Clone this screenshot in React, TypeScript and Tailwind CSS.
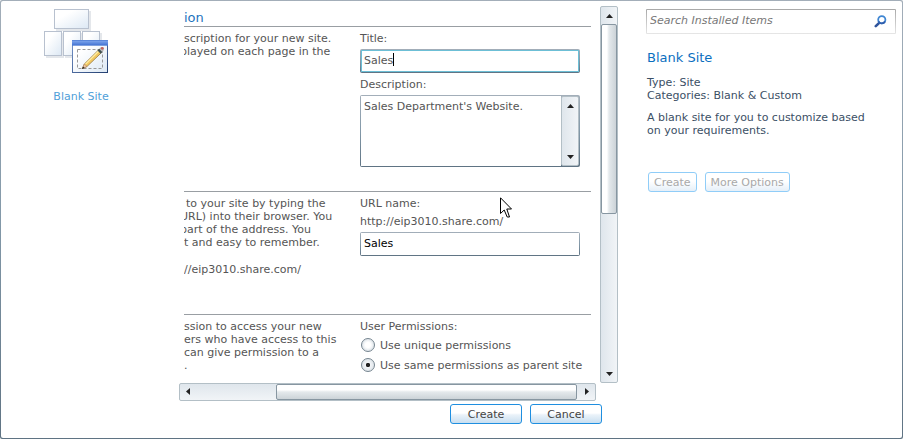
import { useState } from "react";
import type { ReactNode } from "react";

const frame = "rounded-[2px] bg-linear-to-b from-[#a3aeb9] via-[#8399a9] to-[#5f7383] p-px";

function Arrow({ dir }: { dir: "up" | "down" | "left" | "right" }) {
  const points = {
    up: "0,6 3.5,2 7,6",
    down: "0,2 7,2 3.5,6",
    left: "5,0 5,7 1,3.5",
    right: "2,0 2,7 6,3.5",
  }[dir];
  return (
    <svg width="7" height="8" viewBox="0 0 7 8" fill="#222" aria-hidden="true">
      <polygon points={points} />
    </svg>
  );
}

function VerticalBar({ children, size }: { children?: ReactNode; size: string }) {
  return (
    <div className={`flex flex-col rounded-[2px] border border-[#b3bfc6] bg-linear-to-r from-[#dfe6ec] to-[#f1f4f7] ${size}`}>
      <button type="button" aria-label="Scroll up" className="flex h-[17px] w-full shrink-0 items-center justify-center">
        <Arrow dir="up" />
      </button>
      <div className="flex-1">{children}</div>
      <button type="button" aria-label="Scroll down" className="flex h-[17px] w-full shrink-0 items-center justify-center">
        <Arrow dir="down" />
      </button>
    </div>
  );
}

function HorizontalBar() {
  return (
    <div className="mr-[22px] flex h-[18px] rounded-[2px] border border-[#b3bfc6] bg-linear-to-b from-[#dfe6ec] to-[#f1f4f7]">
      <button type="button" aria-label="Scroll left" className="flex w-4 shrink-0 items-center justify-center">
        <Arrow dir="left" />
      </button>
      <div className="flex flex-1 justify-end">
        <div className="w-[301px] rounded-[2px] border border-[#8796a1] bg-linear-to-b from-white from-35% via-[#e4e9ec] via-50% to-[#ccd3d8]" />
      </div>
      <button type="button" aria-label="Scroll right" className="flex w-[18px] shrink-0 items-center justify-center">
        <Arrow dir="right" />
      </button>
    </div>
  );
}

function Section({ help, children, pad }: { help: ReactNode; children: ReactNode; pad: string }) {
  return (
    <section className={`flex border-t border-[#999ea3] pt-[5px] ${pad}`}>
      <div className="w-[176px] shrink-0 overflow-hidden whitespace-nowrap">{help}</div>
      <div className="w-[220px] whitespace-nowrap">{children}</div>
    </section>
  );
}

function SiteIcon() {
  return (
    <svg width="74" height="66" viewBox="0 0 74 66" aria-hidden="true">
      <defs>
        <linearGradient id="tile" x1="0" y1="0" x2="1" y2="1">
          <stop offset="0.3" stopColor="#fff" />
          <stop offset="1" stopColor="#dce8f4" />
        </linearGradient>
        <linearGradient id="bar" x1="0" y1="0" x2="0" y2="1">
          <stop offset="0" stopColor="#88aef0" />
          <stop offset="1" stopColor="#4676d4" />
        </linearGradient>
        <linearGradient id="edge" x1="0" y1="0" x2="1" y2="1">
          <stop offset="0" stopColor="#7796cc" />
          <stop offset="1" stopColor="#233f70" />
        </linearGradient>
      </defs>
      <g fill="#e4e7eb">
        <rect x="12" y="2" width="35" height="20" />
        <rect x="2" y="24" width="18" height="25" />
        <rect x="21" y="24" width="18" height="25" />
        <rect x="40" y="24" width="18" height="25" />
      </g>
      <g fill="url(#tile)" stroke="#b8c1cf">
        <rect x="10.5" y="0.5" width="34" height="19" />
        <rect x="0.5" y="22.5" width="17" height="24" />
        <rect x="19.5" y="22.5" width="17" height="24" />
        <rect x="38.5" y="22.5" width="17" height="24" />
      </g>
      <rect x="28.5" y="31.5" width="35" height="32" fill="url(#tile)" stroke="url(#edge)" />
      <rect x="28" y="31" width="36" height="5" fill="url(#bar)" />
      <path d="M28 31.5h36M28 36.5h36" stroke="#4a78d0" strokeWidth="0.7" />
      <rect x="33.5" y="40.5" width="25" height="19" fill="none" stroke="#999" strokeDasharray="3 2" />
      <path d="M38.500 59.500l1.800-4.500L54.500 41l2.800 2.800L43 57.500z" fill="#f2c861" stroke="#8b6b32" strokeWidth="0.7" />
      <path d="M41.500 55.200L54.800 42" stroke="#fff0a8" strokeWidth="1.100" />
      <path d="M38.500 59.500l1.800-4.500 2.700 2.500z" fill="#f0cba8" stroke="#a07050" strokeWidth="0.5" />
      <path d="M38 60l1-2.500 1.600 1.500z" fill="#222" />
      <path d="M53.500 41.500l1.800-1.800 3.200 3.200-1.800 1.800z" fill="#3f5050" />
      <path d="M55.300 39.700c1-1.700 2.600-2.200 3.800-1.100s1 2.900-0.600 4.300z" fill="#b9b9b9" />
      <circle cx="58.300" cy="39.300" r="1.400" fill="#c4625a" />
    </svg>
  );
}

function SearchIcon() {
  return (
    <svg width="13" height="13" viewBox="0 0 13 13" fill="none" aria-hidden="true">
      <path d="M5.200 7.800L1.800 11.200" stroke="#30559c" strokeWidth="2.600" strokeLinecap="round" />
      <circle cx="7.800" cy="4.800" r="3.600" fill="#fff" stroke="#3f86d2" strokeWidth="1.800" />
      <path d="M4.500 6.300A3.600 3.600 0 0 0 11 6.500" stroke="#315fae" strokeWidth="1.800" />
    </svg>
  );
}

const radio =
  "m-0 ml-px size-[14px] shrink-0 appearance-none rounded-full border border-[#75848f] bg-radial from-white from-30% to-[#cfd8e0] ring-1 ring-[#e3e8ec] ring-inset checked:bg-radial checked:from-[#222] checked:from-20% checked:via-[#f1f4f7] checked:via-30% checked:to-[#d3dbe2]";
const action =
  "h-5 rounded-[3px] border border-[#1f8fe0] bg-linear-to-b from-white from-45% via-[#eaf2f9] via-55% to-[#c9dff0] text-center text-[#444]";
const disabledAction =
  "h-5 rounded-[3px] border border-[#90cdf8] bg-linear-to-b from-white from-45% to-[#e5eff8] px-[5px] text-[#a9a9a9]";

export default function App() {
  const [title, setTitle] = useState("Sales");
  const [description, setDescription] = useState("Sales Department's Website.");
  const [url, setUrl] = useState("Sales");
  const [permission, setPermission] = useState("same");

  return (
    <div className={`flex min-h-screen font-['Verdana','DejaVu_Sans',sans-serif] text-[11px] leading-[13px] text-[#555] ${frame}`}>
      <main className="flex min-w-0 flex-1 rounded-[2px] bg-white pr-[6px]">
        <div className="flex w-[178px] shrink-0 justify-center pt-2 pr-[18px]">
          <button type="button" className="flex flex-col items-center gap-[15px] self-start text-[#509fd9]">
            <SiteIcon />
            <span>Blank Site</span>
          </button>
        </div>

        <div className="relative min-w-0 flex-1 pt-[5px]">
          <div className="flex">
            <form className="min-w-0 flex-1 overflow-hidden pr-[9px] pl-[5px]">
              <h2 className="h-5 overflow-hidden pt-1 text-[13px] leading-4 text-[#1e73bd]">ion</h2>
              <Section
                pad="pb-6"
                help={
                  <>
                    <p>scription for your new site.</p>
                    <p className="-ml-1">played on each page in the</p>
                  </>
                }
              >
                <label htmlFor="title" className="block">Title:</label>
                <div className={`relative mt-1 h-6 ${frame}`}>
                  <input
                    id="title"
                    value={title}
                    onChange={(e) => setTitle(e.target.value)}
                    className="block size-full border border-[#6cbfd6] bg-white px-[2px] pb-[2px] outline-none"
                  />
                  <span className="absolute top-1 left-[33px] h-[13px] w-px bg-black" />
                </div>
                <label htmlFor="description" className="mt-[5px] block">Description:</label>
                <div className={`mt-1 flex h-[72px] ${frame}`}>
                  <textarea
                    id="description"
                    value={description}
                    onChange={(e) => setDescription(e.target.value)}
                    className="block h-full min-w-0 flex-1 resize-none overflow-hidden bg-white px-[3px] py-1 outline-none"
                  />
                  <VerticalBar size="w-[18px]" />
                </div>
              </Section>
              <Section
                pad="pb-[38px]"
                help={
                  <>
                    <p className="pl-[2px]">to your site by typing the</p>
                    <p className="-ml-1">URL) into their browser. You</p>
                    <p className="-ml-1">part of the address. You</p>
                    <p>t and easy to remember.</p>
                    <p className="mt-[14px]">//eip3010.share.com/</p>
                  </>
                }
              >
                <label htmlFor="url" className="block">URL name:</label>
                <p className="mt-[5px]">http://eip3010.share.com/</p>
                <div className={`mt-1 h-6 ${frame}`}>
                  <input
                    id="url"
                    value={url}
                    onChange={(e) => setUrl(e.target.value)}
                    className="block size-full bg-white px-[3px] pb-[2px] text-black outline-none"
                  />
                </div>
              </Section>
              <Section
                pad="pb-[11px]"
                help={
                  <>
                    <p>ssion to access your new</p>
                    <p>ers who have access to this</p>
                    <p>can give permission to a</p>
                    <p>.</p>
                  </>
                }
              >
                <fieldset>
                  <legend>User Permissions:</legend>
                  <label className="mt-[5px] flex h-[14px] items-center gap-[5px]">
                    <input type="radio" name="permission" checked={permission === "unique"} onChange={() => setPermission("unique")} className={radio} />
                    Use unique permissions
                  </label>
                  <label className="mt-[6px] flex h-[14px] items-center gap-[5px]">
                    <input type="radio" name="permission" checked={permission === "same"} onChange={() => setPermission("same")} className={radio} />
                    Use same permissions as parent site
                  </label>
                </fieldset>
              </Section>
            </form>
            <VerticalBar size="w-[18px] shrink-0">
              <div className="h-[190px] rounded-[2px] border border-[#8796a1] bg-linear-to-r from-white from-35% via-[#e4e9ec] via-50% to-[#ccd3d8]" />
            </VerticalBar>
          </div>
          <HorizontalBar />
          <div className="mt-[3px] flex justify-end gap-2 pr-4">
            <button type="button" className={`w-[72px] ${action}`}>Create</button>
            <button type="button" className={`w-[72px] ${action}`}>Cancel</button>
          </div>
          <svg width="12" height="21" viewBox="0 0 12 21" className="absolute top-[196px] left-[321px]" aria-hidden="true">
            <path d="M0.500 0.800V16.500L4.200 13L7.200 20H9.500L6.800 12H11.500z" fill="#fff" stroke="#000" />
          </svg>
        </div>

        <aside className="ml-7 w-[250px] shrink-0 pt-2 text-[#3b4f65]">
          <div className="rounded-[1px] bg-linear-to-b from-[#a8a8a8] to-[#e6e6e6] p-px">
            <div className="flex h-[23px] items-center bg-white pr-2 pl-[3px]">
              <input
                type="search"
                aria-label="Search Installed Items"
                placeholder="Search Installed Items"
                className="min-w-0 flex-1 pb-[2px] italic outline-none placeholder:text-[#777]"
              />
              <button type="button" aria-label="Search">
                <SearchIcon />
              </button>
            </div>
          </div>
          <div className="pl-px">
            <h1 className="mt-4 text-[13px] leading-4 text-[#0b6fbf]">Blank Site</h1>
            <p className="mt-[10px]">Type: Site</p>
            <p>Categories: Blank &amp; Custom</p>
            <p className="mt-[9px] pr-6">A blank site for you to customize based on your requirements.</p>
            <div className="mt-[35px] flex gap-2 pl-px">
              <button type="button" disabled className={disabledAction}>Create</button>
              <button type="button" disabled className={disabledAction}>More Options</button>
            </div>
          </div>
        </aside>
      </main>
    </div>
  );
}
